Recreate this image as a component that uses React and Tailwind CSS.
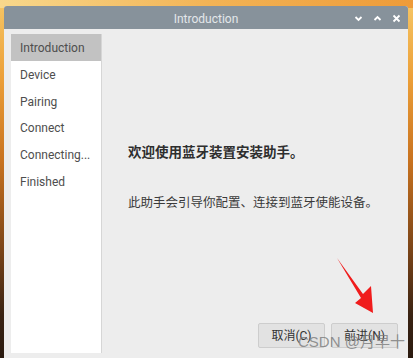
import React from "react";

const items = ["Introduction", "Device", "Pairing", "Connect", "Connecting...", "Finished"];

export default function App() {
  return (
    <div
      className="relative w-[413px] h-[358px] overflow-hidden bg-[linear-gradient(to_bottom,#f6c766_0%,#ec9f38_22%,#c8721f_45%,#7a4418_70%,#3a2313_88%,#2a1a0f_100%)]"
      style={{ fontFamily: "Roboto, 'Noto Sans CJK SC', sans-serif" }}
    >
      <div className="absolute left-0 top-0 w-[413px] h-[8px] bg-[linear-gradient(to_right,#f8d88c,#f3b456_50%,#ee9b38)]" />
      <div className="relative ml-[4px] mt-[6px] w-[404px] h-[360px] flex flex-col bg-[#ededed] rounded-t-[3px] overflow-hidden">
        <div className="relative h-[23px] bg-[#87929b] flex items-center justify-center shrink-0 pt-[2px]">
          <span className="text-[12px] text-[#e3e7ea] leading-none">Introduction</span>
          <div className="absolute right-[7px] top-0 h-[24px] flex items-center gap-[10px]">
            <svg width="9" height="9" viewBox="0 0 9 9">
              <path d="M1.5 3 L4.5 6 L7.5 3" stroke="#ffffff" strokeWidth="1.8" fill="none" />
            </svg>
            <svg width="9" height="9" viewBox="0 0 9 9">
              <path d="M1.5 6 L4.5 3 L7.5 6" stroke="#ffffff" strokeWidth="1.8" fill="none" />
            </svg>
            <svg width="9" height="9" viewBox="0 0 9 9">
              <path d="M1.5 1.5 L7.5 7.5 M7.5 1.5 L1.5 7.5" stroke="#ffffff" strokeWidth="1.8" fill="none" />
            </svg>
          </div>
        </div>
        <div className="flex flex-row pt-[5px] pl-[7px] pr-[7px]">
          <div className="w-[91px] h-[319px] bg-white border-r border-[#d6d6d6] flex flex-col shrink-0">
            {items.map((t, i) => (
              <div
                key={t}
                className={`h-[26.7px] flex items-center pl-[9px] pt-[2px] text-[12px] text-[#4e4e4e] ${i === 0 ? "bg-[#c2c2c2]" : ""}`}
              >
                {t}
              </div>
            ))}
          </div>
          <div className="flex-1 flex flex-col pl-[26px]">
            <div className="mt-[112px] text-[13.5px] font-bold text-[#2e2e2e] leading-none">
              欢迎使用蓝牙装置安装助手。
            </div>
            <div className="mt-[37px] text-[12.5px] text-[#3a3a3a] leading-none">
              此助手会引导你配置、连接到蓝牙使能设备。
            </div>
            <div className="mt-[114px] flex flex-row justify-end gap-[6px] pr-[3px]">
              <div className="w-[67px] h-[25px] bg-[#e2e2e2] border border-[#cdcdcd] rounded-[2px] flex items-center justify-center text-[12px] text-[#333]">
                取消(C)
              </div>
              <div className="w-[67px] h-[25px] bg-[#e2e2e2] border border-[#cdcdcd] rounded-[2px] flex items-center justify-center text-[12px] text-[#333]">
                前进(N)
              </div>
            </div>
          </div>
        </div>
      </div>
      <svg className="absolute left-0 top-0" width="413" height="358" viewBox="0 0 413 358">
        <polygon points="337,258 363,294 371,286 373,313 355,303 361,298" fill="#f01c1c" />
      </svg>
      <div
        className="absolute left-[298px] top-[334px] text-[15px] text-[#7a7a7a]/80 leading-none whitespace-nowrap"
        style={{ fontFamily: "'Liberation Sans', 'Noto Sans CJK SC', sans-serif" }}
      >
        CSDN @月早十
      </div>
    </div>
  );
}
